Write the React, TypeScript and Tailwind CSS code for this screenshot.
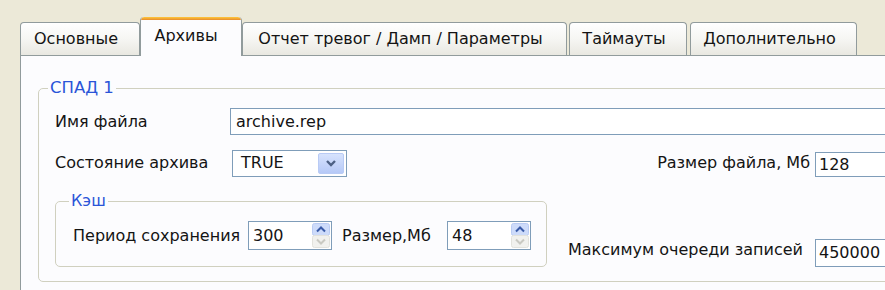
import React from "react";

function Tab({ w, children, className = "" }: { w: number; children: React.ReactNode; className?: string }) {
  return (
    <div
      style={{ width: w }}
      className={`h-[33px] flex items-center justify-center pr-[8px] border border-b-0 border-[#919b9c] rounded-t-[4px] bg-gradient-to-b from-[#ffffff] via-[#f6f6f3] to-[#e9e8e1] ${className}`}
    >
      {children}
    </div>
  );
}

function ActiveTab({ w, children }: { w: number; children: React.ReactNode }) {
  return (
    <div
      style={{ width: w }}
      className="relative z-10 -mb-px h-[39px] flex flex-col border-x border-[#919b9c] rounded-t-[4px] bg-[#fcfcfe] overflow-hidden"
    >
      <div className="h-[3px] bg-gradient-to-b from-[#ffc83c] to-[#e68b2c] rounded-t-[3px]" />
      <div className="flex-1 flex items-center justify-center pb-[4px] pr-[10px]">{children}</div>
    </div>
  );
}

function SpinIcon() {
  return (
    <svg width="18" height="25" viewBox="0 0 18 25">
      <rect x="0.5" y="0.5" width="17" height="12" rx="2" fill="#cddbfa" stroke="#b9cbf3" />
      <path d="M5 8.5 L9 4.5 L13 8.5" fill="none" stroke="#3a5ba8" strokeWidth="2" />
      <rect x="0.5" y="12.5" width="17" height="12" rx="2" fill="#f1f1ee" stroke="#e2e2dc" />
      <path d="M5 16.5 L9 20.5 L13 16.5" fill="none" stroke="#c9c9c2" strokeWidth="2" />
    </svg>
  );
}

function SpinInput({ value }: { value: string }) {
  return (
    <div className="w-[84px] h-[29px] border border-[#7f9db9] bg-white flex items-center justify-between pl-[4px] pr-[1px]">
      <span>{value}</span>
      <SpinIcon />
    </div>
  );
}

function Combo({ value }: { value: string }) {
  return (
    <div className="ml-[2px] w-[115px] h-[27px] border border-[#7f9db9] bg-white flex items-center justify-between pl-[8px] pr-[2px]">
      <span>{value}</span>
      <div className="w-[26px] h-[21px] rounded-[2px] border border-[#b9cbf5] bg-gradient-to-b from-[#d7e3fd] to-[#b6c9f7] flex items-center justify-center">
        <svg width="12" height="8" viewBox="0 0 12 8">
          <path d="M2 2 L6 6 L10 2" fill="none" stroke="#4d6185" strokeWidth="2.4" />
        </svg>
      </div>
    </div>
  );
}

export default function App() {
  return (
    <div className="w-[885px] h-[290px] overflow-hidden bg-[#ece9d8] font-['DejaVu_Sans',Verdana,sans-serif] text-[16px] text-[#141414]">
      <div className="pl-[20px] pt-[17px] w-[940px]">
        <div className="flex items-end h-[38px]">
          <Tab w={120}>Основные</Tab>
          <ActiveTab w={102}>Архивы</ActiveTab>
          <Tab w={325}>Отчет тревог / Дамп / Параметры</Tab>
          <Tab w={118} className="ml-[2px]">Таймауты</Tab>
          <Tab w={167} className="ml-[3px]">Дополнительно</Tab>
        </div>
        <div className="h-[240px] bg-[#fcfcfe] border-l border-t border-[#919b9c] pl-[17px] pt-[22px]">
          <fieldset className="w-[900px] border border-[#d0d0bf] rounded-[5px] p-0 pb-[14px]">
            <legend className="ml-[9px] px-[2px] leading-[20px] text-[16.5px] text-[#2a55d8]">СПАД 1</legend>
            <div className="pl-[16px] pt-[10px] flex flex-col">
              <div className="flex items-center h-[27px]">
                <span className="w-[175px]">Имя файла</span>
                <div className="w-[700px] h-[27px] border border-[#7f9db9] bg-white flex items-center pl-[5px]">
                  archive.rep
                </div>
              </div>
              <div className="flex items-center h-[28px] mt-[14px]">
                <span className="w-[175px]">Состояние архива</span>
                <Combo value="TRUE" />
                <span className="w-[468px] text-right pr-[5px]">Размер файла, Мб</span>
                <div className="w-[100px] h-[25px] mt-[3px] border border-[#7f9db9] bg-white flex items-center pl-[3px]">128</div>
              </div>
              <div className="flex items-end mt-[14px]">
                <fieldset className="w-[492px] border border-[#d0d0bf] rounded-[5px] p-0 pb-[16px]">
                  <legend className="ml-[13px] px-[2px] leading-[20px] text-[#2a55d8]">Кэш</legend>
                  <div className="pl-[17px] pt-[10px] flex items-center">
                    <span className="w-[175px]">Период сохранения</span>
                    <SpinInput value="300" />
                    <span className="w-[115px] pl-[10px]">Размер,Мб</span>
                    <SpinInput value="48" />
                  </div>
                </fieldset>
                <span className="w-[268px] text-right pr-[12px] mb-[5px] whitespace-nowrap">Максимум очереди записей</span>
                <div className="w-[100px] h-[28px] border border-[#7f9db9] bg-white flex items-center pl-[3px]">450000</div>
              </div>
            </div>
          </fieldset>
        </div>
      </div>
    </div>
  );
}
